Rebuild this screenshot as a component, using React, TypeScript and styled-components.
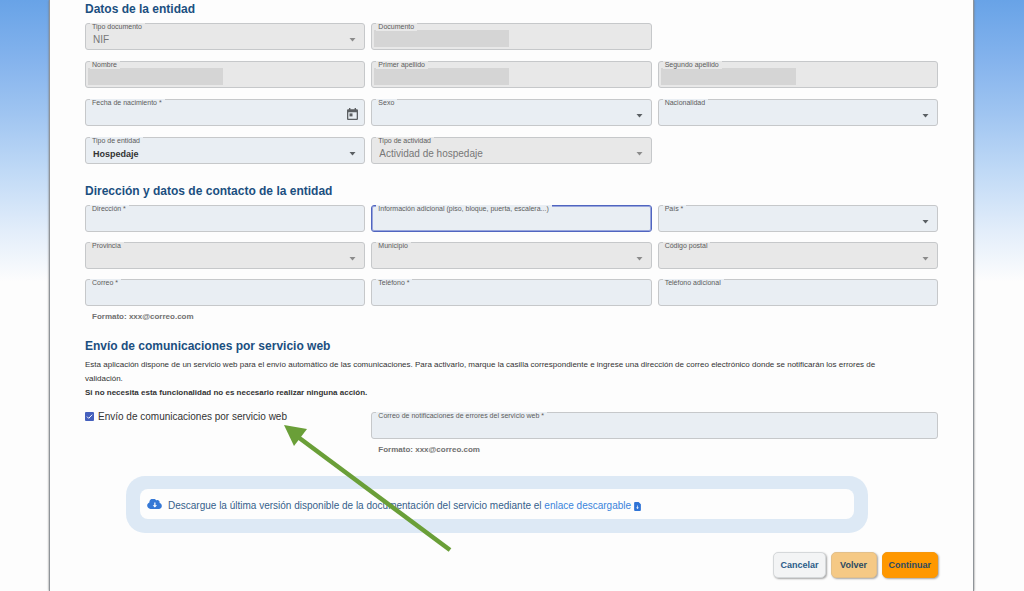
import React, { useId } from "react";
import styled, { createGlobalStyle, css } from "styled-components";

const GlobalStyle = createGlobalStyle`
  *, *::before, *::after { box-sizing: border-box; }
  html { background: #fdfdfd; }
  body {
    margin: 0;
    font-family: "Liberation Sans", Arial, Helvetica, sans-serif;
    font-size: 8px;
    color: #333;
  }
`;

const Page = styled.div`
  position: relative;
  min-height: 100vh;
  display: flex;
  justify-content: center;
  overflow: hidden;
  background: linear-gradient(
    #68a3e7 0px,
    #84b3ed 60px,
    #a0c5f1 115px,
    #bfd9f6 170px,
    #e2edfa 230px,
    #fdfdfd 282px
  );
`;

const Sheet = styled.main`
  width: 100%;
  margin: 0 50px 0 49px;
  padding: 2px 35px 13px;
  display: flex;
  flex-direction: column;
  background: #fdfdfd;
  border: solid #8f9499;
  border-width: 0 1px;
  box-shadow: 0 0 2px #777;
`;

const Section = styled.section<{ $after: number }>`
  display: flex;
  flex-direction: column;
  margin-bottom: ${(p) => p.$after}px;
`;

const Title = styled.h2<{ $tight?: boolean }>`
  margin: 0 0 ${(p) => (p.$tight ? 5 : 7)}px;
  font-size: 12px;
  line-height: 14px;
  font-weight: 700;
  color: #1b4f80;
`;

const Grid = styled.div<{ $gap: number }>`
  display: grid;
  grid-template-columns: repeat(3, minmax(0, 1fr));
  gap: ${(p) => p.$gap}px 6px;
`;

const Cell = styled.div<{ $span?: number }>`
  grid-column: span ${(p) => p.$span ?? 1};
`;

const Box = styled.div<{ $disabled?: boolean; $focused?: boolean }>`
  --fill: ${(p) => (p.$disabled ? "#e8e8e8" : "#e9eef3")};
  position: relative;
  display: flex;
  height: 27px;
  background: var(--fill);
  border: 1px solid #c6c8ca;
  border-radius: 3px;
  ${(p) =>
    p.$focused &&
    css`
      border-color: #5065c0;
      box-shadow: inset 0 0 0 1px #98a5dc;
    `}
`;

const Label = styled.label`
  position: absolute;
  top: -1px;
  left: 4px;
  padding: 0 3px 0 2px;
  font-size: 7px;
  line-height: 8px;
  color: #5c5c5c;
  background: var(--fill);
  white-space: nowrap;
`;

const controlStyle = css`
  flex: 1;
  min-width: 0;
  margin: 0;
  padding: 6px 7px 0;
  border: 0;
  outline: 0;
  background: transparent;
  font: inherit;
  font-size: 10px;
  color: #333;
  opacity: 1;
  &:disabled { color: #777; }
`;

const Input = styled.input`${controlStyle}`;

const Select = styled.select`
  ${controlStyle}
  appearance: none;
  &:enabled {
    font-size: 9px;
    font-weight: 700;
  }
`;

const Caret = styled.svg<{ $muted?: boolean }>`
  position: absolute;
  right: 8px;
  top: 14px;
  width: 7px;
  height: 4px;
  fill: ${(p) => (p.$muted ? "#8b8b8b" : "#5a5f63")};
  pointer-events: none;
`;

const DateButton = styled.button`
  display: flex;
  align-items: flex-end;
  padding: 0 6px 5px;
  border: 0;
  background: none;
  color: #5c5f62;
`;

const Redacted = styled.span`
  position: absolute;
  left: 2px;
  top: 6px;
  width: 135px;
  height: 17px;
  background: #d5d5d5;
`;

const Hint = styled.div`
  padding: 6px 7px 0;
  font-size: 8px;
  line-height: 9px;
  font-weight: 700;
  color: #707070;
`;

const Text = styled.p<{ $strong?: boolean }>`
  margin: 0;
  font-size: 8px;
  line-height: 14px;
  font-weight: ${(p) => (p.$strong ? 700 : 400)};
`;

const ServiceGrid = styled(Grid)`
  margin-top: 12px;
`;

const CheckCell = styled.div`
  position: relative;
`;

const CheckLabel = styled.label`
  display: flex;
  align-items: center;
  gap: 4px;
  height: 8px;
  font-size: 10px;
  white-space: nowrap;
`;

const CheckBox = styled.input`
  appearance: none;
  width: 9px;
  height: 9px;
  margin: 0;
  border-radius: 1px;
  background: #4560bd;
`;

const CheckMark = styled.svg`
  position: absolute;
  left: 1px;
  top: 1px;
  width: 7px;
  height: 7px;
  pointer-events: none;
`;

const Arrow = styled.svg`
  position: absolute;
  left: 199px;
  top: 13px;
  width: 170px;
  height: 130px;
  z-index: 2;
  pointer-events: none;
`;

const Callout = styled.aside`
  width: 87%;
  margin-left: 41px;
  padding: 13px 14px 14px;
  background: #dde9f5;
  border-radius: 19px;
`;

const CalloutBody = styled.div`
  display: flex;
  align-items: center;
  gap: 6px;
  height: 30px;
  padding: 0 7px;
  background: #fdfdfd;
  border-radius: 8px;
  font-size: 10px;
  color: #365f8b;
  p { margin: 0; padding-top: 2px; }
  a { color: #3a84dc; text-decoration: none; }
  a svg { margin-left: 3px; vertical-align: -2px; }
`;

const Actions = styled.div`
  display: flex;
  justify-content: flex-end;
  gap: 5px;
  margin-top: 19px;
`;

const tones = {
  plain: { bg: "#f3f4f5", edge: "#d5d8da", ink: "#2b5b88" },
  soft: { bg: "#f5c985", edge: "#e3c08a", ink: "#2c4a62" },
  main: { bg: "#ff9800", edge: "#f7980c", ink: "#2c4a62" },
};

const Button = styled.button<{ $tone: keyof typeof tones }>`
  min-width: 46px;
  height: 26px;
  padding: 0 6px;
  font: inherit;
  font-size: 9px;
  font-weight: 700;
  color: ${(p) => tones[p.$tone].ink};
  background: ${(p) => tones[p.$tone].bg};
  border: 1px solid ${(p) => tones[p.$tone].edge};
  border-radius: 5px;
  box-shadow: 1px 1px 2px rgba(0, 0, 0, 0.35);
`;

type FieldProps = {
  label: string;
  kind?: "text" | "select" | "date";
  value?: string;
  disabled?: boolean;
  focused?: boolean;
  redacted?: boolean;
  hint?: string;
  span?: number;
};

function Field({ label, kind = "text", value = "", disabled, focused, redacted, hint, span }: FieldProps) {
  const id = useId();
  return (
    <Cell $span={span}>
      <Box $disabled={disabled} $focused={focused}>
        {kind === "select" ? (
          <>
            <Select id={id} defaultValue={value} disabled={disabled}>
              <option value={value}>{value}</option>
            </Select>
            <Caret viewBox="0 0 7 4" $muted={disabled}>
              <path d="M0.5 0h6L3.5 3.6z" />
            </Caret>
          </>
        ) : (
          <Input id={id} type="text" defaultValue={value} disabled={disabled} />
        )}
        {kind === "date" && (
          <DateButton type="button" aria-label="Abrir calendario">
            <svg width="11" height="12" viewBox="0 0 11 12" fill="currentColor">
              <path
                fillRule="evenodd"
                d="M2 0h1.4v1.2h4.2V0H9v1.2h.7c.7 0 1.3.5 1.3 1.2v8.3c0 .7-.6 1.3-1.3 1.3H1.3C.6 12 0 11.4 0 10.7V2.4C0 1.7.6 1.2 1.3 1.2H2zM1.3 4.2v6.5h8.400V4.2z"
              />
              <path d="M2.5 5.4h3v3h-3z" />
            </svg>
          </DateButton>
        )}
        {redacted && <Redacted />}
        <Label htmlFor={id}>{label}</Label>
      </Box>
      {hint && <Hint>{hint}</Hint>}
    </Cell>
  );
}

export default function App() {
  return (
    <Page>
      <GlobalStyle />
      <Sheet>
        <Section $after={20}>
          <Title>Datos de la entidad</Title>
          <Grid $gap={11}>
            <Field label="Tipo documento" kind="select" value="NIF" disabled />
            <Field label="Documento" disabled redacted />
            <div />
            <Field label="Nombre" disabled redacted />
            <Field label="Primer apellido" disabled redacted />
            <Field label="Segundo apellido" disabled redacted />
            <Field label="Fecha de nacimiento *" kind="date" />
            <Field label="Sexo" kind="select" />
            <Field label="Nacionalidad" kind="select" />
            <Field label="Tipo de entidad" kind="select" value="Hospedaje" />
            <Field label="Tipo de actividad" kind="select" value="Actividad de hospedaje" disabled />
          </Grid>
        </Section>

        <Section $after={18}>
          <Title>Dirección y datos de contacto de la entidad</Title>
          <Grid $gap={10}>
            <Field label="Dirección *" />
            <Field label="Información adicional (piso, bloque, puerta, escalera...)" focused />
            <Field label="País *" kind="select" />
            <Field label="Provincia" kind="select" disabled />
            <Field label="Municipio" kind="select" disabled />
            <Field label="Código postal" kind="select" disabled />
            <Field label="Correo *" hint="Formato: xxx@correo.com" />
            <Field label="Teléfono *" />
            <Field label="Teléfono adicional" />
          </Grid>
        </Section>

        <Section $after={22}>
          <Title $tight>Envío de comunicaciones por servicio web</Title>
          <Text>
            Esta aplicación dispone de un servicio web para el envío automático de las comunicaciones. Para activarlo,
            marque la casilla correspondiente e ingrese una dirección de correo electrónico donde se notificarán los
            errores de <br />
            validación.
          </Text>
          <Text $strong>Si no necesita esta funcionalidad no es necesario realizar ninguna acción.</Text>
          <ServiceGrid $gap={10}>
            <CheckCell>
              <CheckLabel>
                <CheckBox type="checkbox" defaultChecked />
                Envío de comunicaciones por servicio web
              </CheckLabel>
              <CheckMark viewBox="0 0 7 7" fill="none" stroke="#fff">
                <path d="M1 3.6l1.700 1.700L6.200 1.700" />
              </CheckMark>
              <Arrow viewBox="0 0 170 130" aria-hidden="true">
                <path d="M14 12L166 125" stroke="#6a9f38" strokeWidth="4.500" />
                <path d="M0 0l23 4-13 17z" fill="#6a9f38" />
              </Arrow>
            </CheckCell>
            <Field
              label="Correo de notificaciones de errores del servicio web *"
              hint="Formato: xxx@correo.com"
              span={2}
            />
          </ServiceGrid>
        </Section>

        <Callout>
          <CalloutBody>
            <svg width="15" height="11" viewBox="0 0 640 480" aria-hidden="true">
              <path
                fill="#3578d6"
                d="M537.600 178.600c4.100-10.700 6.400-22.400 6.400-34.600 0-53-43-96-96-96-19.700 0-38.100 6-53.300 16.200C367 16.200 315.300-16 256-16 167.600-16 96 55.600 96 144c0 2.700.1 5.400.2 8.100C40.200 171.800 0 225.200 0 288c0 79.500 64.500 144 144 144h368c70.700 0 128-57.300 128-128 0-61.900-44-113.600-102.400-125.400z"
              />
              <path fill="#fff" d="M310 150h52v120h70L336 372l-96-102h70z" />
            </svg>
            <p>
              Descargue la última versión disponible de la documentación del servicio mediante el{" "}
              <a href="#documentacion">
                enlace descargable
                <svg width="7" height="9" viewBox="0 0 6 8" aria-hidden="true">
                  <path fill="#2f74d6" d="M.8 0H4l2 2v5.200a.8.8 0 0 1-.8.8H.8a.8.8 0 0 1-.8-.8V.8A.8.8 0 0 1 .8 0z" />
                  <path fill="#fff" d="M2.700 3.200h.6v1.600h1L3 6.200 1.700 4.800h1z" />
                </svg>
              </a>
            </p>
          </CalloutBody>
        </Callout>

        <Actions>
          <Button type="button" $tone="plain">Cancelar</Button>
          <Button type="button" $tone="soft">Volver</Button>
          <Button type="button" $tone="main">Continuar</Button>
        </Actions>
      </Sheet>
    </Page>
  );
}
